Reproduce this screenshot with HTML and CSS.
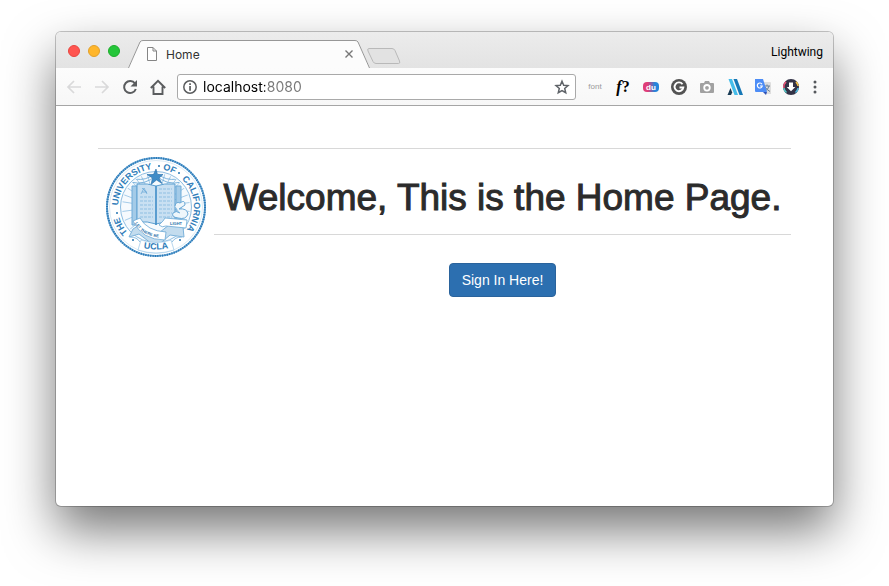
FILE: index.html
```html
<!DOCTYPE html>
<html lang="en">
<head>
<meta charset="utf-8">
<title>Home</title>
<link rel="stylesheet" href="styles.css">
</head>
<body>
<div class="window">
  <header class="tabstrip">
    <div class="lights">
      <button class="light close" aria-label="Close window"></button>
      <button class="light minimize" aria-label="Minimize window"></button>
      <button class="light zoom" aria-label="Zoom window"></button>
    </div>
    <div class="tab">
      <svg class="tab-shape" viewBox="0 0 242 28" aria-hidden="true"><path d="M0 28 12 2Q13 .5 15 .5H227Q229 .5 230 2L242 28Z" fill="#fcfcfc"/><path d="M.5 28 12 2Q13 .5 15 .5H227Q229 .5 230 2L241.500 28" fill="none" stroke="#979797"/></svg>
      <svg class="page-icon" viewBox="0 0 12 14" aria-hidden="true"><path d="M1.500.5h5.500l3.500 3.500v9.500h-9zM7 .5v3.500h3.500" fill="#fff" stroke="#858585"/></svg>
      <span class="tab-title">Home</span>
      <button class="tab-close" aria-label="Close tab"><svg width="10" height="10" viewBox="0 0 10 10"><path d="m1.500 1.500 7 7m0-7-7 7" stroke="#777" stroke-width="1.400"/></svg></button>
    </div>
    <button class="new-tab" aria-label="New tab"><svg width="35" height="18" viewBox="0 0 35 18"><path d="M3 1.500h23q2 0 3 2l4.500 10.500q1 2.500-1 2.500H10q-2 0-3-2L2 4Q1 1.500 3 1.500Z" fill="#e2e2e2" stroke="#b9b9b9"/></svg></button>
    <span class="profile">Lightwing</span>
  </header>
  <form class="toolbar">
    <button type="button" class="nav" aria-label="Back"><svg viewBox="0 0 16 16"><path d="M15 8H2m6-6-6 6 6 6" fill="none" stroke="#d9d9da" stroke-width="1.700"/></svg></button>
    <button type="button" class="nav" aria-label="Forward"><svg viewBox="0 0 16 16"><path d="M1 8h13M8 2l6 6-6 6" fill="none" stroke="#d9d9da" stroke-width="1.700"/></svg></button>
    <button type="button" class="nav" aria-label="Reload"><svg viewBox="0 0 16 16"><path d="M13 4.500A6 6 0 1 0 13.800 10" fill="none" stroke="#5a5c5e" stroke-width="2"/><path d="M15 1v6.500H8.500Z" fill="#5a5c5e"/></svg></button>
    <button type="button" class="nav" aria-label="Home page"><svg viewBox="0 0 16 16"><path d="M.8 9 8 1.800 15.200 9M3.500 7.500v7.500h9V7.500" fill="none" stroke="#5a5c5e" stroke-width="1.900"/></svg></button>
    <div class="omnibox">
      <svg class="info" viewBox="0 0 14 14" aria-hidden="true"><circle cx="7" cy="7" r="6.200" fill="none" stroke="#5a5c5e" stroke-width="1.500"/><path d="M6.200 3.200h1.700v1.700H6.200zM6.200 6.100h1.700v4.700H6.200z" fill="#5a5c5e"/></svg>
      <input class="address" type="text" aria-label="Address" value="localhost:8080">
      <button type="button" class="star" aria-label="Bookmark"><svg viewBox="0 0 16 16"><path d="m8 2.200 1.700 4 4.300.4-3.300 2.900 1 4.200L8 11.500l-3.700 2.200 1-4.200L2 6.600l4.300-.4Z" fill="none" stroke="#5f6368" stroke-width="1.500"/></svg></button>
    </div>
    <div class="extensions">
      <button type="button" class="ext font-ext">font</button>
      <button type="button" class="ext what-font"><i>f</i>?</button>
      <button type="button" class="ext" aria-label="du"><svg viewBox="0 0 16 16"><defs><linearGradient id="du"><stop offset=".3" stop-color="#df3e78"/><stop offset=".75" stop-color="#2485dc"/></linearGradient></defs><rect y="3" width="16" height="10" rx="4" fill="url(#du)"/><text x="8" y="11" text-anchor="middle" class="du-text">du</text></svg></button>
      <button type="button" class="ext" aria-label="G"><svg viewBox="0 0 16 16"><circle cx="8" cy="8" r="8" fill="#535353"/><path d="M11.500 5.200A4.400 4.400 0 1 0 12.300 8.500H8.500" fill="none" stroke="#fff" stroke-width="1.900"/></svg></button>
      <button type="button" class="ext" aria-label="Screenshot"><svg viewBox="0 0 16 16"><path d="M2 4h3l1-2h4l1 2h3q1 0 1 1v8q0 1-1 1H2q-1 0-1-1V5q0-1 1-1Z" fill="#a1a1a1"/><circle cx="8" cy="8.800" r="2.800" fill="none" stroke="#fff" stroke-width="1.800"/></svg></button>
      <button type="button" class="ext" aria-label="Stripes"><svg viewBox="0 0 16 16"><path d="M1.500 0h3.500l6 16H7.500Z" fill="#45bdea"/><path d="M6.500 0H10l6 16h-3.500Z" fill="#1678b6"/><path d="m3.500 9 1.700 4.500L4 16H.5Z" fill="#193c55"/></svg></button>
      <button type="button" class="ext" aria-label="Translate"><svg viewBox="0 0 16 16"><path d="M6 3h9q1 0 1 1v11h-6Z" fill="#dedede"/><path d="M9 7h6m-3-1.500V7m2 0q-1 4-4 5m0-4q2 3 5 4.500" fill="none" stroke="#68809a"/><path d="M0 0h8l4 13H1q-1 0-1-1Z" fill="#4d8df6"/><path d="m8 13 3 3 1-3Z" fill="#3153b5"/><path d="M7 5.200A2.500 2.500 0 1 0 7.300 7H5" fill="none" stroke="#fff" stroke-width="1.200"/></svg></button>
      <button type="button" class="ext" aria-label="Download"><svg viewBox="0 0 16 16"><circle cx="8" cy="8" r="7" fill="#333347" stroke="#333347" stroke-width="2"/><g fill="none" stroke-width="1.600"><path d="M.9 9A7.200 7.200 0 0 1 3 2.900" stroke="#e45075"/><path d="M13 2.900A7.200 7.200 0 0 1 15.100 7" stroke="#f2bf46"/><path d="M15.100 9A7.200 7.200 0 0 1 12.500 13.500" stroke="#4ab8df"/><path d="M3.500 13.500A7.200 7.200 0 0 1 .9 9" stroke="#53c6c5"/></g><path d="M6 3.500h4V8h2.300L8 12.300 3.700 8H6Z" fill="#fff"/></svg></button>
    </div>
    <button type="button" class="menu" aria-label="Menu"><svg width="4" height="14" viewBox="0 0 4 14"><g fill="#55585c"><circle cx="2" cy="2" r="1.500"/><circle cx="2" cy="7" r="1.500"/><circle cx="2" cy="12" r="1.500"/></g></svg></button>
  </form>
  <main class="page">
    <div class="banner">
      <svg class="seal" viewBox="0 0 100 100" role="img" aria-label="University seal">
        <defs>
          <path id="ring" d="M50 88A38 38 0 0 1 50 12A38 38 0 0 1 50 88"/>
          <path id="base" d="M22 86Q50 99 78 86"/>
          <path id="motto" d="M29 66Q36 80 59 81"/>
          <clipPath id="inner"><circle cx="50" cy="50" r="34"/></clipPath>
        </defs>
        <circle cx="50" cy="50" r="49" fill="none" stroke="#6aa8d6" stroke-width="2"/>
        <circle cx="50" cy="50" r="49" fill="none" stroke="#2a78b6" stroke-width="2" stroke-dasharray="1.200 1.200"/>
        <circle cx="50" cy="50" r="46.500" fill="none" stroke="#c3dcee" stroke-width=".6"/>
        <circle cx="50" cy="50" r="35.500" fill="#f6fafd" stroke="#8dbde1"/>
        <g clip-path="url(#inner)" fill="none" stroke="#a4cbe8">
          <path d="M50 50 14 12M50 50 8 22M50 50 8 34M50 50 5 43M50 50 5 56M50 50 8 68M50 50 15 80M50 50 22 10M50 50 30 8M50 50 38 5M50 50 62 5M50 50 70 8M50 50 79 10M50 50 86 13M50 50 92 22M50 50 92 34M50 50 95 44M50 50 95 56M50 50 92 68M50 50 85 80"/>
          <path d="M24 25Q40 29 50 18Q60 29 76 25M29 22Q40 24 48 17M71 22Q60 24 52 17" stroke="#7db3db"/>
        </g>
        <path d="M26 29h5v39h-5zM70 29h5v39h-5z" fill="#a4cbe8" stroke="#6fabd8"/>
        <path d="M31 27q11-1 19 2 8-3 19-2v38q-11-1-19 2-8-3-19-2Z" fill="#c9e0f2" stroke="#5c9fd0"/>
        <path d="M50 29v39" stroke="#3f8cc7" stroke-width="1.600"/>
        <path d="M34 40h13M34 44h13M34 48h13M34 52h13M34 56h13M34 60h13M53 32h13M53 36h13M53 40h13M53 44h13M53 48h13M53 52h13M53 56h13M53 60h13" stroke="#8fbfe2" stroke-dasharray="3 1"/>
        <path d="m35 37 3-6 3 6m-5-2h5m-5-4 5 5" fill="none" stroke="#6fabd8" stroke-width=".8"/>
        <path d="m50 12 1.500 5.500 5.500 0-4 3.500 3 5.500-5.500-3.500-5.500 4.500 1.500-6.500-5.500-3.500h6.500Z" fill="#3f8cc7" stroke="#286fa9" stroke-width=".6"/>
        <path d="M69 49q1-5 5-3 5-4 5 2l-6 4q8-1 9 5-2 6-10 4-7-1-5-5 3-3 7 0" fill="#eef6fb" stroke="#6aa8d6"/>
        <path d="M27 72l8-5 14 12 14-11 14 2 1 10-14-2-14 12-17-13-10 3Z" fill="#c3dcee" stroke="#7db3db"/>
        <path d="m27 64 7-3q7 13 26 14l-1 8q-23 0-32-19ZM59 61l22 2-1 8-20-2q-4 2-7-1l4-4Z" fill="#fff" stroke="#6aa8d6" stroke-width=".8"/>
        <text class="motto"><textPath href="#motto">LET THERE BE</textPath></text>
        <text class="motto" x="64" y="68">LIGHT</text>
        <path d="M24 80q7 0 10 5M76 80q-7 0-10 5" fill="none" stroke="#8dbde1"/>
        <path d="M35 83q15 5 30 0l3 10q-18 6-36 0Z" fill="#fff" stroke="#a4cbe8" stroke-width=".8"/>
        <g class="ring-text">
          <text><textPath href="#ring" startOffset="17%">THE</textPath></text>
          <text><textPath href="#ring" startOffset="37%">UNIVERSITY</textPath></text>
          <text><textPath href="#ring" startOffset="55.500%">OF</textPath></text>
          <text><textPath href="#ring" startOffset="73.500%">CALIFORNIA</textPath></text>
          <text><textPath href="#base" startOffset="50%">UCLA</textPath></text>
        </g>
        <g fill="#2373b1"><circle cx="11" cy="56" r="1"/><circle cx="53" cy="9" r="1"/><circle cx="73" cy="16" r="1"/><circle cx="27" cy="83" r="1"/><circle cx="74" cy="83" r="1"/></g>
      </svg>
      <div class="intro">
        <h1>Welcome, This is the Home Page.</h1>
        <button type="button" class="sign-in">Sign In Here!</button>
      </div>
    </div>
  </main>
</div>
</body>
</html>
```

FILE: styles.css
```css
* { box-sizing: border-box; }

body {
  margin: 0;
  min-height: 100vh;
  padding: 32px 56px 80px;
  display: flex;
  background: #fff;
  font-family: "Liberation Sans", Arial, sans-serif;
  overflow: hidden;
}

button {
  padding: 0;
  border: 0;
  background: none;
  font: inherit;
}

svg { display: block; }

.window {
  flex: 1;
  min-width: 0;
  display: flex;
  flex-direction: column;
  border-radius: 5px;
  background: #fff;
  box-shadow: 0 0 0 1px rgba(0, 0, 0, .22), 0 24px 50px rgba(0, 0, 0, .54);
}

.tabstrip {
  display: flex;
  align-items: flex-end;
  height: 36px;
  padding-right: 10px;
  border-radius: 5px 5px 0 0;
  background: linear-gradient(#ececec, #e3e3e3);
  font-family: Roboto, sans-serif;
  color: #000;
}

.lights {
  display: flex;
  gap: 8px;
  width: 72px;
  padding: 2px 0 0 12px;
  align-self: center;
}

.light {
  width: 12px;
  height: 12px;
  border-radius: 50%;
  border: 1px solid;
}

.close { background: #ff5550; border-color: #e8453f; }
.minimize { background: #ffb62b; border-color: #e2a02a; }
.zoom { background: #25c63a; border-color: #1dad2b; }

.tab {
  position: relative;
  display: flex;
  align-items: center;
  width: 242px;
  height: 28px;
  padding: 0 16px 0 18px;
  font: 12px Inter, sans-serif;
}

.tab-shape {
  position: absolute;
  inset: 0;
  width: 100%;
  height: 100%;
}

.page-icon, .tab-title, .tab-close { position: relative; }
.page-icon { width: 12px; height: 14px; }
.tab-title { flex: 1; margin-left: 8px; color: #333; }
.new-tab { height: 18px; margin: 0 auto 3px -4px; }

.profile {
  align-self: center;
  padding-top: 3px;
  font-size: 12px;
}

.toolbar {
  display: flex;
  align-items: center;
  height: 38px;
  padding: 0 16px 0 10px;
  border-bottom: 1px solid #a5a5a5;
  background: linear-gradient(#fcfcfc, #f7f7f7);
}

.nav { width: 16px; margin-right: 12px; }

.omnibox {
  flex: 1;
  min-width: 0;
  display: flex;
  align-items: center;
  height: 26px;
  margin-left: -1px;
  padding: 0 5px;
  border: 1px solid #a9a9a9;
  border-radius: 3px;
  background: #fff;
}

.info { width: 14px; flex: none; }

.address {
  flex: 1;
  min-width: 0;
  margin-left: 6px;
  padding: 0;
  border: 0;
  outline: 0;
  font: 14px/20px Inter, sans-serif;
  color: transparent;
  background: linear-gradient(90deg, #000 62px, #777 62px);
  background-clip: text;
}

.star { width: 16px; }

.extensions {
  display: flex;
  align-items: center;
  gap: 12px;
  margin: 0 14px 0 11px;
}

.ext { width: 16px; height: 16px; white-space: nowrap; }
.font-ext { font-size: 8px; color: #999; }
.what-font { font: bold 16px/16px "Liberation Serif", serif; }
.du-text { font: bold 8px "Liberation Sans", sans-serif; fill: #fff; }

.page { padding: 42px; }

.banner {
  display: flex;
  align-items: flex-start;
  border-top: 1px solid #d8d8d8;
}

.seal {
  flex: none;
  width: 100px;
  height: 100px;
  margin: 8px;
}

.ring-text {
  font: bold 9px "Liberation Sans", sans-serif;
  fill: #2f7dba;
  text-anchor: middle;
}

.motto {
  font: bold 4px "Liberation Sans", sans-serif;
  fill: #286fa9;
}

.intro {
  flex: 1;
  display: flex;
  flex-direction: column;
  align-items: center;
}

h1 {
  align-self: stretch;
  margin: 0 0 28px;
  padding: 29px 0 16px;
  border-bottom: 1px solid #d8d8d8;
  font-size: 37px;
  font-weight: 400;
  line-height: 40px;
  text-align: center;
  color: #2b2b2b;
  -webkit-text-stroke: 1px #2b2b2b;
}

.sign-in {
  height: 34px;
  padding: 0 12px;
  border: 1px solid #2a639c;
  border-radius: 4px;
  background: #2c6fb0;
  color: #fff;
  font-size: 14px;
}
```
